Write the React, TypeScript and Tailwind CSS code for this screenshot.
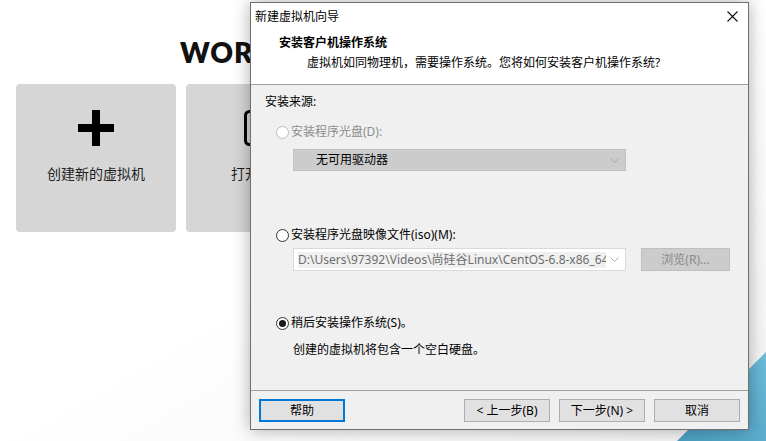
import React from "react";

const ui = { fontFamily: '"Noto Sans", "Noto Sans CJK SC", sans-serif' };

function Radio({ checked = false, disabled = false }: { checked?: boolean; disabled?: boolean }) {
  return (
    <span
      className={`flex h-[13px] w-[13px] shrink-0 items-center justify-center rounded-full border bg-white ${
        disabled ? "border-[#bcbcbc]" : "border-[#333333]"
      }`}
    >
      {checked && <span className="h-[7px] w-[7px] rounded-full bg-[#1a1a1a]" />}
    </span>
  );
}

function Chevron() {
  return (
    <svg width="9" height="5" viewBox="0 0 9 5" className="shrink-0">
      <path d="M0.5 0.5 L4.5 4.5 L8.5 0.5" fill="none" stroke="#a8a8a8" strokeWidth="1" />
    </svg>
  );
}

function WinButton({ label, focused = false }: { label: string; focused?: boolean }) {
  return (
    <button
      className={`flex h-[23px] w-[86px] items-center justify-center bg-[#e1e1e1] text-[12px] leading-4 text-black ${
        focused ? "border-2 border-[#0078d7]" : "border border-[#adadad]"
      }`}
    >
      {label}
    </button>
  );
}

function HomeCard({ label, icon }: { label: string; icon: React.ReactNode }) {
  return (
    <div className="flex h-[148px] w-[160px] flex-col items-center rounded-[4px] bg-[#d6d6d6] pt-[26px]">
      <div className="flex h-[36px] items-center justify-center">{icon}</div>
      <div className="mt-[18px] text-[14px] leading-5 text-[#1e1e1e]">{label}</div>
    </div>
  );
}

export default function App() {
  return (
    <div
      className="relative h-[441px] w-full overflow-hidden bg-linear-to-br from-white via-white to-[#f2f2f2]"
      style={ui}
    >
      {/* workstation home page behind the wizard */}
      <div className="pt-[35px]">
        <h1
          className="ml-[180px] whitespace-nowrap text-[28px] font-extrabold leading-[34px] tracking-[1px] text-[#111]"
          style={{ fontFamily: '"Lato", "Open Sans", sans-serif' }}
        >
          WORKSTATION 14 PRO
        </h1>
        <div className="mt-[15px] flex gap-[10px] pl-[16px]">
          <HomeCard
            label="创建新的虚拟机"
            icon={
              <svg width="36" height="36" viewBox="0 0 36 36">
                <rect x="14" y="0" width="8" height="36" fill="#000" />
                <rect x="0" y="14" width="36" height="8" fill="#000" />
              </svg>
            }
          />
          <HomeCard
            label="打开虚拟机"
            icon={
              <svg width="44" height="36" viewBox="0 0 44 36">
                <rect x="1.5" y="1.5" width="41" height="33" rx="4" fill="none" stroke="#000" strokeWidth="3" />
              </svg>
            }
          />
          <HomeCard
            label="连接远程服务器"
            icon={
              <svg width="40" height="36" viewBox="0 0 40 36">
                <rect x="1.5" y="1.5" width="37" height="25" rx="2" fill="none" stroke="#000" strokeWidth="3" />
                <rect x="12" y="30" width="16" height="4" fill="#000" />
              </svg>
            }
          />
        </div>
      </div>

      {/* desktop wallpaper corner */}
      <svg className="absolute bottom-0 right-0" width="90" height="90" viewBox="0 0 90 90">
        <defs>
          <linearGradient id="teal" x1="0" y1="1" x2="1" y2="0">
            <stop offset="0" stopColor="#4a9ec1" />
            <stop offset="1" stopColor="#6dbcda" />
          </linearGradient>
        </defs>
        <polygon points="1,90 90,1 90,90" fill="url(#teal)" />
      </svg>

      {/* new VM wizard */}
      <div className="absolute left-[250px] top-[2px] flex h-[428px] w-[499px] flex-col border border-[#6f6f6f] bg-[#f0f0f0] text-[12px] leading-4 text-black shadow-[0_0_16px_rgba(0,0,0,0.32)]">
        <div className="flex h-[27px] items-center justify-between bg-white pl-[4px] pr-[10px]">
          <span>新建虚拟机向导</span>
          <svg width="11" height="11" viewBox="0 0 11 11">
            <path d="M0.5 0.5 L10.5 10.5 M10.5 0.5 L0.5 10.5" stroke="#111" strokeWidth="1.1" />
          </svg>
        </div>

        <div className="h-[55px] border-b border-[#a0a0a0] bg-white pt-[5px]">
          <div className="ml-[28px] font-bold">安装客户机操作系统</div>
          <div className="ml-[56px] mt-[4px]">虚拟机如同物理机，需要操作系统。您将如何安装客户机操作系统?</div>
        </div>

        <div className="flex-1 px-[14px] pt-[9px]">
          <div>安装来源:</div>

          <div className="ml-[11px] mt-[14px] flex items-center gap-[2px] text-[#8d8d8d]">
            <Radio disabled />
            <span>安装程序光盘(D):</span>
          </div>
          <div className="ml-[28px] mt-[9px] flex h-[22px] w-[333px] items-center justify-between border border-[#c2c2c2] bg-[#cccccc] pl-[22px] pr-[6px]">
            <span>无可用驱动器</span>
            <Chevron />
          </div>

          <div className="ml-[11px] mt-[56px] flex items-center gap-[2px]">
            <Radio />
            <span>安装程序光盘映像文件(iso)(M):</span>
          </div>
          <div className="ml-[28px] mt-[5px] flex items-center gap-[15px]">
            <div className="flex h-[23px] w-[333px] items-center justify-between border border-[#d9d9d9] bg-white pl-[4px] pr-[6px]">
              <span className="w-[308px] overflow-hidden whitespace-nowrap bg-[#f0f0f0] text-[#6d6d6d]">
                D:\Users\97392\Videos\尚硅谷Linux\CentOS-6.8-x86_64.iso
              </span>
              <Chevron />
            </div>
            <div className="flex h-[23px] w-[89px] items-center justify-center border border-[#bfbfbf] bg-[#cccccc] text-[#8a8a8a]">
              浏览(R)...
            </div>
          </div>

          <div className="ml-[11px] mt-[44px] flex items-center gap-[2px]">
            <Radio checked />
            <span>稍后安装操作系统(S)。</span>
          </div>
          <div className="ml-[28px] mt-[11px]">创建的虚拟机将包含一个空白硬盘。</div>
        </div>

        <div className="flex h-[39px] items-start justify-between border-t border-[#a0a0a0] px-[8px] pt-[8px]">
          <WinButton label="帮助" focused />
          <div className="flex gap-[9px]">
            <WinButton label="< 上一步(B)" />
            <WinButton label="下一步(N) >" />
            <WinButton label="取消" />
          </div>
        </div>
      </div>
    </div>
  );
}
